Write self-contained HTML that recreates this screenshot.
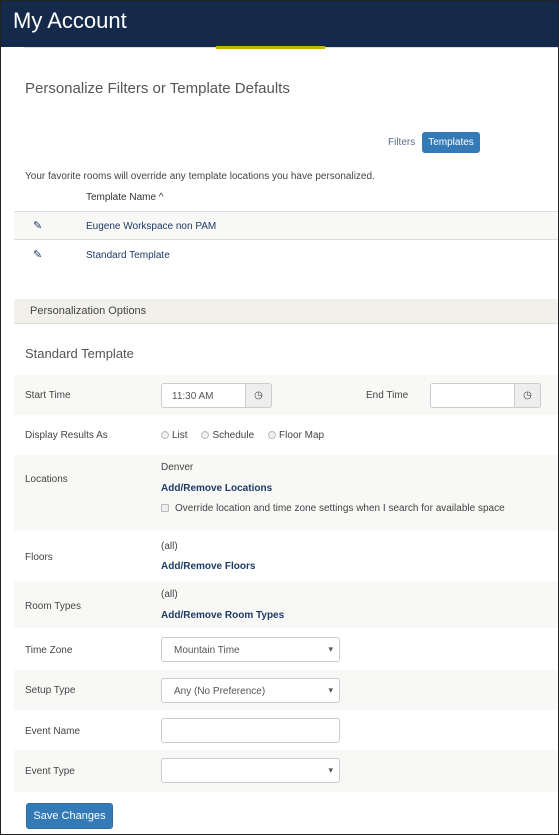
<!DOCTYPE html>
<html><head><meta charset="utf-8"><style>
*{box-sizing:border-box;margin:0;padding:0}
body{width:559px;height:835px;position:relative;overflow:hidden;background:#fff;font-family:"Liberation Sans",sans-serif;font-size:10px;color:#444}
.a{position:absolute}
.row{position:absolute;left:14px;right:0}
.g{background:#f8f8f6}
.lbl{position:absolute;left:11px;font-size:10px;color:#444}
.inp{position:absolute;border:1px solid #ccc;border-radius:3px;background:#fff;height:25px}
.sel{position:absolute;left:147px;width:179px;height:25px;border:1px solid #ccc;border-radius:3px;background:#fff;font-size:10px;color:#555;padding:7px 0 0 12px}
.sel:after{content:"▾";position:absolute;right:6px;top:6px;font-size:9px;color:#555}
.btn{position:absolute;width:27px;height:25px;border:1px solid #ccc;border-radius:0 3px 3px 0;background:#eee}
.link{color:#1f3a66;font-weight:bold}
.rad{display:inline-block;width:8px;height:8px;border:1px solid #bbb;border-radius:50%;background:#eee;vertical-align:-1px;margin-right:3px}
</style></head><body>
<div class="a" style="left:0;top:0;width:559px;height:47px;background:#152a4a"></div>
<div class="a" style="left:13px;top:8px;font-size:22px;color:#fff">My Account</div>
<div class="a" style="left:24px;top:47px;width:535px;height:1px;background:#ddd"></div>
<div class="a" style="left:216px;top:46px;width:109px;height:3px;background:#c8b400"></div>
<div class="a" style="left:25px;top:80px;font-size:15px;color:#555">Personalize Filters or Template Defaults</div>
<div class="a" style="left:388px;top:137px;color:#5a6a8a">Filters</div>
<div class="a" style="left:422px;top:132px;width:58px;height:21px;background:#337ab7;border-radius:3px;color:#fff;text-align:center;line-height:21px">Templates</div>
<div class="a" style="left:25px;top:171px">Your favorite rooms will override any template locations you have personalized.</div>
<div class="a" style="left:86px;top:192px;color:#333">Template Name ^</div>
<div class="row g" style="top:211px;height:29px;border-top:1px solid #ddd;border-bottom:1px solid #ddd"></div>
<div class="a" style="left:33px;top:219px;font-size:11px;color:#1f3a66">✎</div>
<div class="a" style="left:86px;top:221px;color:#1f3a66">Eugene Workspace non PAM</div>
<div class="a" style="left:33px;top:248px;font-size:11px;color:#1f3a66">✎</div>
<div class="a" style="left:86px;top:250px;color:#1f3a66">Standard Template</div>
<div class="row" style="top:299px;height:25px;background:#f1f0ea;border-bottom:1px solid #ddd;border-radius:3px 0 0 0"></div>
<div class="a" style="left:30px;top:305px;font-size:11px;color:#444">Personalization Options</div>
<div class="a" style="left:25px;top:346px;font-size:13px;color:#555">Standard Template</div>

<div class="row g" style="top:375px;height:40px"></div>
<div class="lbl" style="left:25px;top:390px">Start Time</div>
<div class="inp" style="left:161px;top:383px;width:85px;border-radius:3px 0 0 3px;padding:7px 0 0 10px;color:#555">11:30 AM</div>
<div class="btn" style="left:245px;top:383px;text-align:center;line-height:23px">◷</div>
<div class="lbl" style="left:366px;top:390px">End Time</div>
<div class="inp" style="left:430px;top:383px;width:85px;border-radius:3px 0 0 3px"></div>
<div class="btn" style="left:514px;top:383px;text-align:center;line-height:23px">◷</div>

<div class="lbl" style="left:25px;top:430px">Display Results As</div>
<div class="a" style="left:161px;top:430px"><span class="rad"></span>List &nbsp;&nbsp;&nbsp; <span class="rad"></span>Schedule &nbsp;&nbsp;&nbsp; <span class="rad"></span>Floor Map</div>

<div class="row g" style="top:455px;height:76px"></div>
<div class="lbl" style="left:25px;top:474px">Locations</div>
<div class="a" style="left:161px;top:462px">Denver</div>
<div class="a link" style="left:161px;top:483px">Add/Remove Locations</div>
<div class="a" style="left:161px;top:503px"><span style="display:inline-block;width:8px;height:8px;border:1px solid #bbb;background:#eee;border-radius:1px;margin-right:6px;vertical-align:-1px"></span>Override location and time zone settings when I search for available space</div>

<div class="lbl" style="left:25px;top:552px">Floors</div>
<div class="a" style="left:161px;top:541px">(all)</div>
<div class="a link" style="left:161px;top:561px">Add/Remove Floors</div>

<div class="row g" style="top:581px;height:47px"></div>
<div class="lbl" style="left:25px;top:601px">Room Types</div>
<div class="a" style="left:161px;top:589px">(all)</div>
<div class="a link" style="left:161px;top:610px">Add/Remove Room Types</div>

<div class="lbl" style="left:25px;top:645px">Time Zone</div>
<div class="sel" style="left:161px;top:637px">Mountain Time</div>

<div class="row g" style="top:670px;height:40px"></div>
<div class="lbl" style="left:25px;top:685px">Setup Type</div>
<div class="sel" style="left:161px;top:678px">Any (No Preference)</div>

<div class="lbl" style="left:25px;top:726px">Event Name</div>
<div class="inp" style="left:161px;top:718px;width:179px"></div>

<div class="row g" style="top:750px;height:42px"></div>
<div class="lbl" style="left:25px;top:766px">Event Type</div>
<div class="sel" style="left:161px;top:758px"></div>

<div class="a" style="left:26px;top:803px;width:87px;height:26px;background:#337ab7;border:1px solid #2e6da4;border-radius:3px;color:#fff;font-size:11px;text-align:center;line-height:24px">Save Changes</div>
<div class="a" style="left:0;top:0;width:559px;height:835px;border:1px solid #222"></div>
</body></html>
